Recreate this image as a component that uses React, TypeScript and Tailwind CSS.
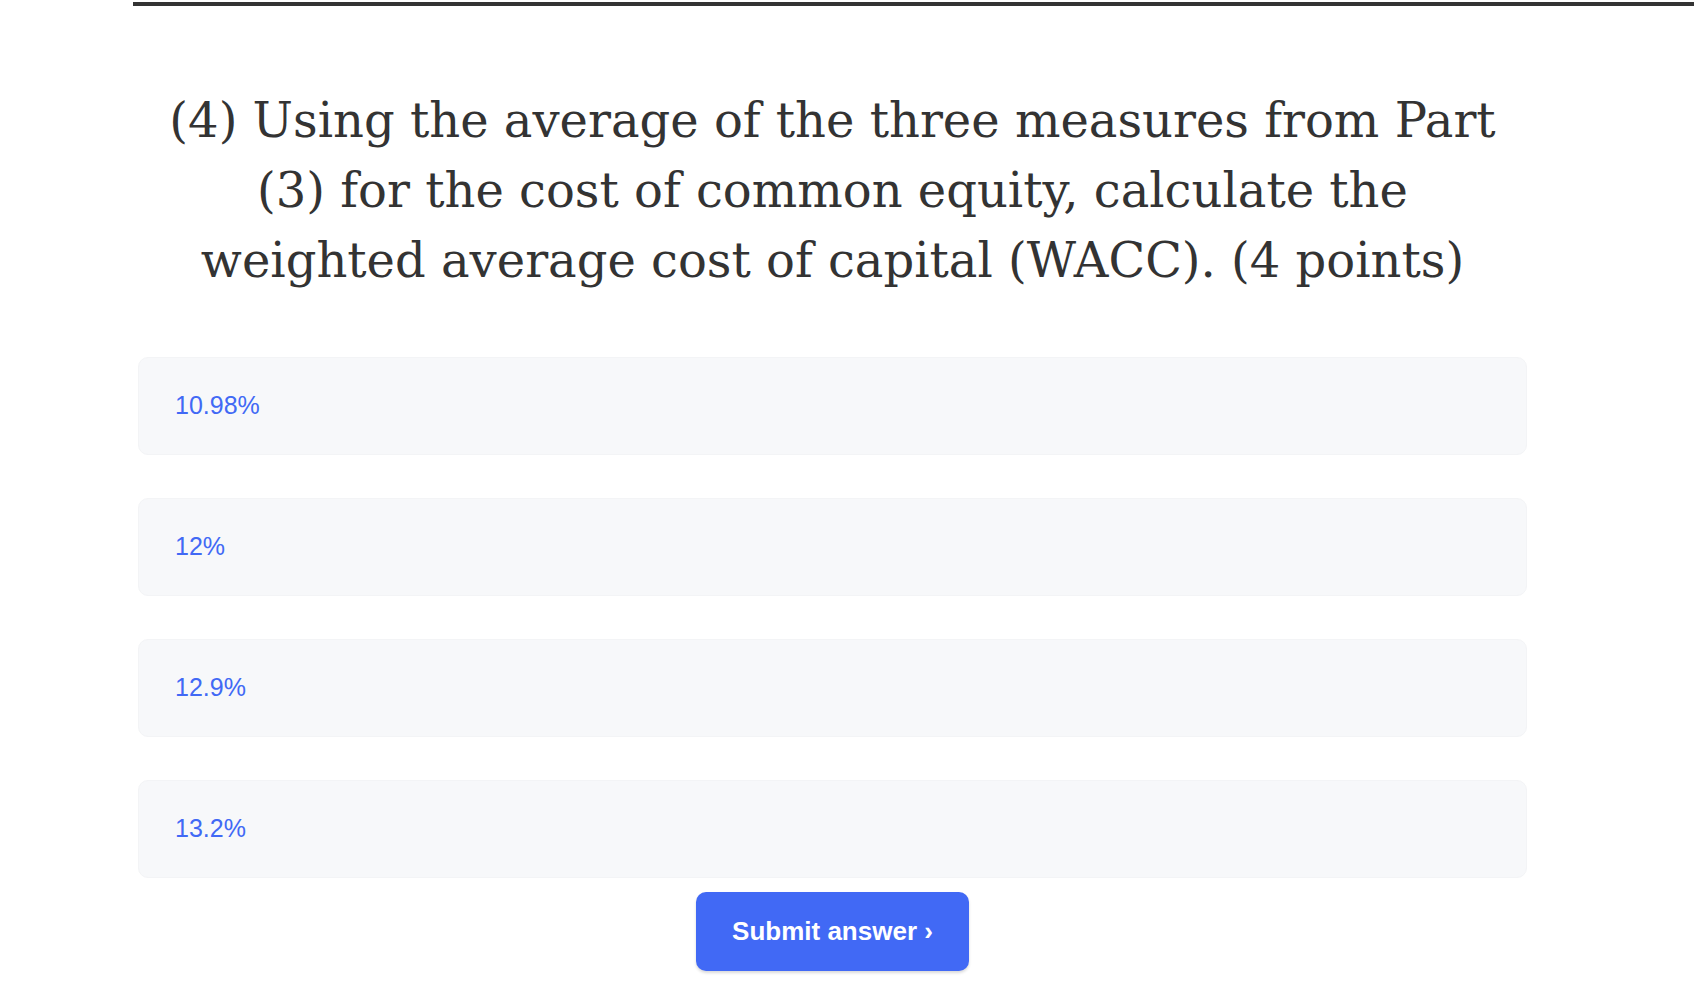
import React from "react";

const options = ["10.98%", "12%", "12.9%", "13.2%"];

export default function App() {
  return (
    <div className="min-h-screen bg-white">
      <div className="pt-[2px]">
        <div className="ml-[133px] h-[4px] bg-[#333333]" />
      </div>
      <div className="ml-[138px] w-[1389px]">
        <h1
          className="mt-[79px] text-center text-[#333333] text-[48px] leading-[70px] font-normal"
          style={{ fontFamily: '"DejaVu Serif", Georgia, serif' }}
        >
          (4) Using the average of the three measures from Part
          <br />
          (3) for the cost of common equity, calculate the
          <br />
          weighted average cost of capital (WACC). (4 points)
        </h1>
        <div className="mt-[62px] flex flex-col gap-[43px]">
          {options.map((o) => (
            <div
              key={o}
              className="h-[98px] rounded-[10px] bg-[#f7f8fa] border border-[#f3f4f6] flex items-center px-[36px] text-[25px] text-[#4169f5]"
              style={{ fontFamily: '"Liberation Sans", Arial, sans-serif' }}
            >
              {o}
            </div>
          ))}
        </div>
        <div className="mt-[14px] flex justify-center">
          <button
            className="w-[273px] h-[79px] rounded-[10px] bg-[#4169f5] text-white font-bold text-[26px] shadow-[0_2px_3px_rgba(0,0,0,0.15)]"
            style={{ fontFamily: '"Liberation Sans", Arial, sans-serif' }}
          >
            Submit answer ›
          </button>
        </div>
      </div>
    </div>
  );
}
